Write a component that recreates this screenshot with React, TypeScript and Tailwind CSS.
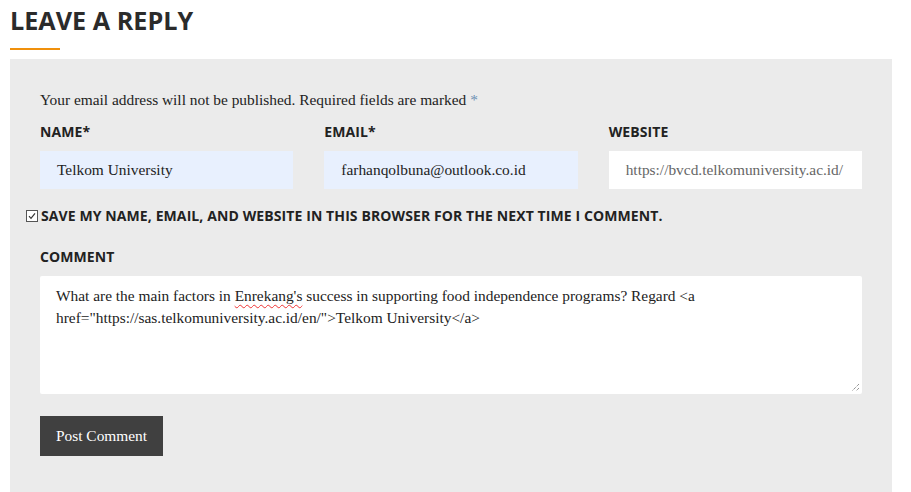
import React from "react";

export default function App() {
  const serif = { fontFamily: '"Liberation Serif", serif' };
  return (
    <div className="w-[911px] h-[492px] bg-white overflow-hidden" style={{ fontFamily: '"Open Sans", sans-serif' }}>
      <div className="pl-[10px] pr-[19px]">
        <h3 className="text-[25.2px] leading-[40px] font-bold text-[#2b2b2b] pt-0">LEAVE A REPLY</h3>
        <div className="mt-[8px] w-[50px] h-[2px] bg-[#f0900c]" />
        <div className="mt-[9px] bg-[#ebebeb] pt-[30px] pb-[40px]">
          <p className="px-[30px] text-[15.4px] leading-[22px] text-[#222]" style={serif}>
            Your email address will not be published. Required fields are marked <span className="text-[#6b8fb3]">*</span>
          </p>
          <div className="px-[30px] mt-[11px] grid grid-cols-3 gap-x-[31px]">
            {[
              { label: "NAME*", value: "Telkom University", bg: "bg-[#e8f0fe]", color: "text-[#222]" },
              { label: "EMAIL*", value: "farhanqolbuna@outlook.co.id", bg: "bg-[#e8f0fe]", color: "text-[#222]" },
              { label: "WEBSITE", value: "https://bvcd.telkomuniversity.ac.id/", bg: "bg-white", color: "text-[#666]" },
            ].map((f) => (
              <div key={f.label}>
                <div className="text-[14px] leading-[20px] font-bold text-[#222] tracking-[0.1px]">{f.label}</div>
                <div className={`mt-[9px] h-[38px] ${f.bg} flex items-center pl-[17px] pr-[2px] overflow-hidden whitespace-nowrap`}>
                  <span className={`text-[15.4px] ${f.color}`} style={serif}>{f.value}</span>
                </div>
              </div>
            ))}
          </div>
          <div className="mt-[17px] pl-[16px] flex items-center gap-[3px]">
            <span className="w-[12px] h-[12px] border border-[#555] bg-white flex items-center justify-center">
              <svg width="10" height="10" viewBox="0 0 10 10">
                <path d="M2 5.2 L4 7.4 L8 2.4" fill="none" stroke="#333" strokeWidth="1.2" />
              </svg>
            </span>
            <span className="text-[14px] leading-[20px] font-bold text-[#222] tracking-[0.1px]">
              SAVE MY NAME, EMAIL, AND WEBSITE IN THIS BROWSER FOR THE NEXT TIME I COMMENT.
            </span>
          </div>
          <div className="px-[30px] mt-[21px]">
            <div className="text-[14px] leading-[20px] font-bold text-[#222] tracking-[0.1px]">COMMENT</div>
            <div className="relative mt-[9px] h-[118px] bg-white pl-[16px] pr-[20px] pt-[9px] rounded-[2px]">
              <p className="text-[15.4px] leading-[22px] text-[#222]" style={serif}>
                What are the main factors in{" "}
                <span className="underline decoration-wavy decoration-[#e33] decoration-1 underline-offset-[3px]">Enrekang's</span>{" "}
                success in supporting food independence programs? Regard &lt;a href="https://sas.telkomuniversity.ac.id/en/"&gt;Telkom University&lt;/a&gt;
              </p>
              <svg className="absolute right-[2px] bottom-[2px]" width="9" height="9" viewBox="0 0 9 9">
                <path d="M8 1 L1 8 M8 5 L5 8" stroke="#666" strokeWidth="1" strokeDasharray="1 1" />
              </svg>
            </div>
            <button className="mt-[22px] h-[40px] px-[16px] bg-[#404040] text-white text-[15.4px]" style={serif}>
              Post Comment
            </button>
          </div>
        </div>
      </div>
    </div>
  );
}
